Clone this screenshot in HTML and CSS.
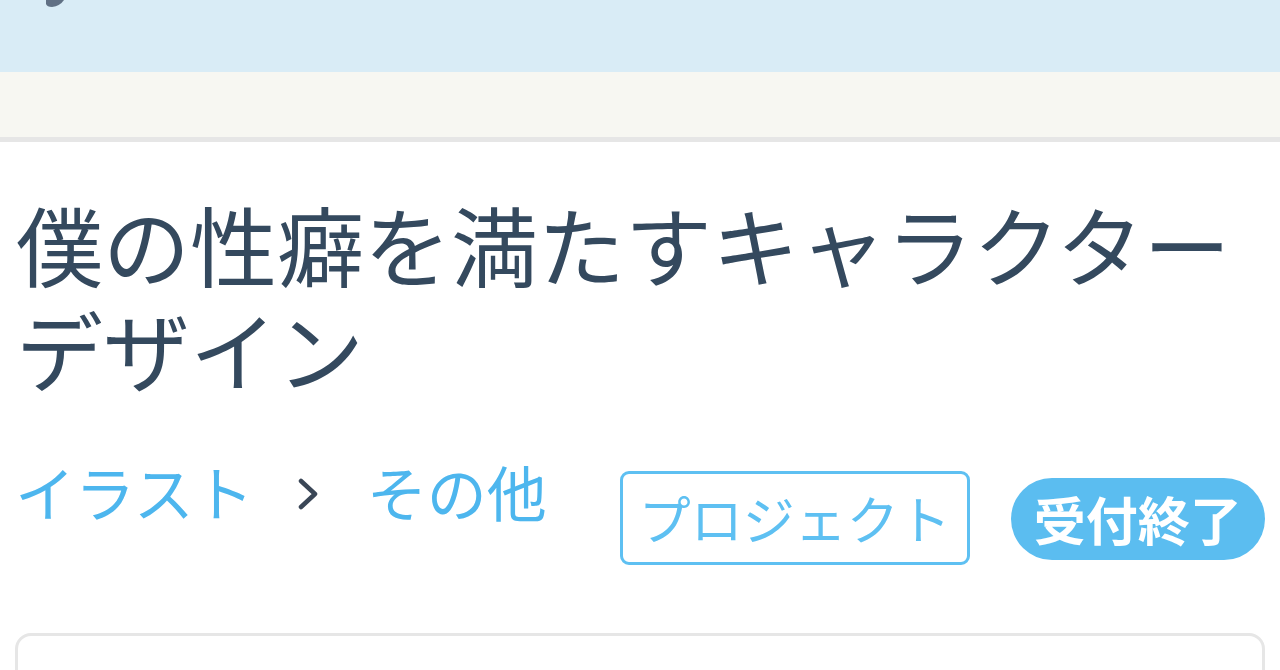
FILE: index.html
```html
<!DOCTYPE html>
<html lang="ja">
<head>
<meta charset="utf-8">
<title>僕の性癖を満たすキャラクターデザイン</title>
<link rel="stylesheet" href="styles.css">
</head>
<body>
<header class="topbar">
  <svg class="logo-tip" width="24" height="10" viewBox="0 0 24 10"><path d="M2 0 L20 0 Q16 6 8 7 Q3 7 2 4 Z" fill="#4a5a70" opacity="0.85"/></svg>
</header>
<div class="subbar"></div>
<main class="main">
  <h1 class="title">僕の性癖を満たすキャラクターデザイン</h1>
  <div class="meta">
    <nav class="crumbs">
      <a class="crumb">イラスト</a>
      <svg class="chev" width="22" height="34" viewBox="0 0 22 34"><polyline points="4,4 18,17 4,30" fill="none" stroke="#3a4656" stroke-width="4.5" stroke-linecap="round" stroke-linejoin="round"/></svg>
      <a class="crumb">その他</a>
    </nav>
    <span class="tag">プロジェクト</span>
    <span class="badge">受付終了</span>
  </div>
  <section class="card"></section>
</main>
</body>
</html>
```
FILE: styles.css
```css
html, body {
  margin: 0;
  padding: 0;
  background: #ffffff;
  font-family: "Noto Sans CJK JP", "Noto Sans", sans-serif;
  overflow: hidden;
}
.topbar {
  height: 72px;
  background: #d9ecf6;
  position: relative;
}
.logo-tip {
  position: absolute;
  left: 44px;
  top: 0;
}
.subbar {
  height: 65px;
  background: #f7f7f2;
  border-bottom: 5px solid #e6e6e6;
}
.main {
  padding: 49px 15px 0;
}
.title {
  margin: 0;
  font-size: 87px;
  line-height: 105px;
  font-weight: 400;
  color: #34495e;
  padding-left: 1px;
}
.meta {
  display: flex;
  align-items: flex-start;
  margin-top: 54px;
  height: 110px;
}
.crumbs {
  display: flex;
  align-items: flex-start;
  font-size: 60px;
  line-height: 72px;
  color: #4db6ee;
}
.crumb {
  color: #4db6ee;
}
.chev {
  margin: 22px 48px 0 43px;
}
.tag {
  margin-left: 73px;
  margin-top: 16px;
  height: 94px;
  box-sizing: border-box;
  display: inline-flex;
  align-items: center;
  padding: 0 16px;
  border: 3px solid #5ec0f2;
  border-radius: 9px;
  font-size: 52px;
  line-height: 1;
  color: #5ec0f2;
}
.badge {
  margin-left: 41px;
  margin-top: 23px;
  height: 82px;
  box-sizing: border-box;
  display: inline-flex;
  align-items: center;
  padding: 0 23px;
  border-radius: 41px;
  background: #5bbdf0;
  color: #ffffff;
  font-size: 52px;
  font-weight: 700;
  line-height: 1;
}
.card {
  margin-top: 68px;
  height: 200px;
  border: 3px solid #e6e6e6;
  border-radius: 16px;
}
```
